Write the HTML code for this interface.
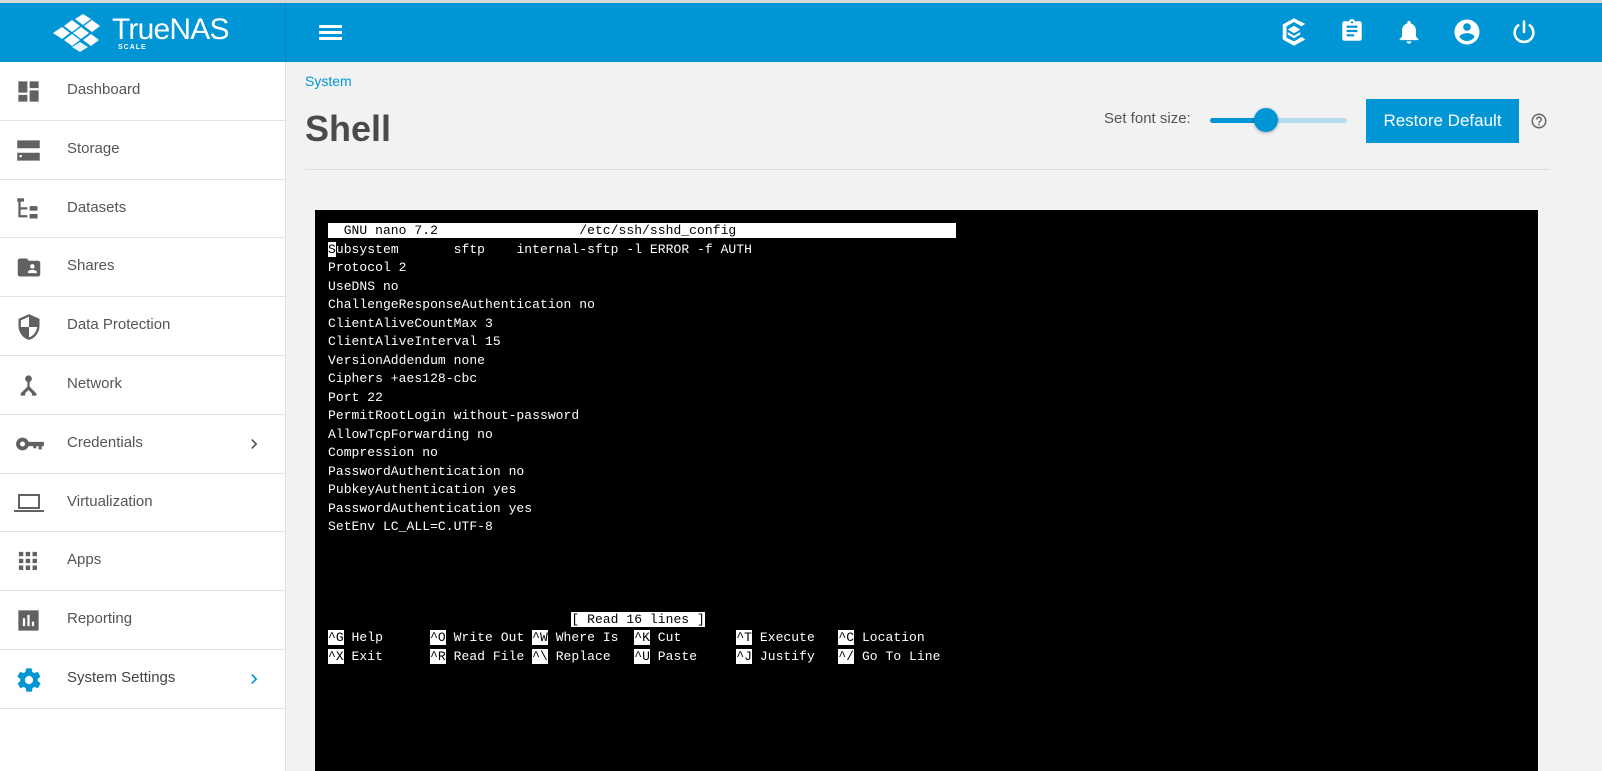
<!DOCTYPE html>
<html><head><meta charset="utf-8"><style>
*{box-sizing:border-box;margin:0;padding:0}
body{width:1602px;height:771px;overflow:hidden;background:#f2f2f2;font-family:"Liberation Sans",sans-serif;position:relative}
.top{position:absolute;left:0;top:0;width:1602px;height:3px;background:#d8d8d8}
.hdr{position:absolute;left:0;top:3px;width:1602px;height:59px;background:#0095d5}
.logoarea{position:absolute;left:0;top:0;width:286px;height:59px;border-right:1px solid #0a84bb}
.side{position:absolute;left:0;top:62px;width:286px;height:709px;background:#fff;border-right:1px solid #ddd}
.item{height:58.8px;border-bottom:1px solid #e2e2e2;position:relative;color:#555;font-size:15px}
.item span{position:absolute;left:67px;top:19px}
.item .ic{position:absolute;left:15px;top:16px}
.item .chev{position:absolute;left:244px;top:19px}
.term{position:absolute;left:315px;top:210px;width:1223px;height:561px;background:#000}
pre{position:absolute;left:13px;top:12px;font-family:"Liberation Mono",monospace;font-size:13px;line-height:18.5px;color:#fff;letter-spacing:0.05px}
.w{background:#fff;color:#000}
</style></head><body>
<div class="top"></div>
<div class="hdr">
 <div class="logoarea">
  <svg width="56" height="40" viewBox="0 0 56 40" style="position:absolute;left:50px;top:10px" fill="#fff">
   <polygon points="3,20 12,14 20,20 12,26"/><polygon points="14,13 22,7 30,13 22,19"/>
   <polygon points="25,6 33,1 41,6 33,12"/><polygon points="23,20 31,14 39,20 31,26"/><polygon points="34,13 42,7 50,13 42,19"/>
   <polygon points="14,27 22,21 30,27 22,33"/><polygon points="33,27 41,21 49,27 41,33"/><polygon points="22,34 30,29 38,34 30,39" opacity=".9"/>
  </svg>
  <div style="position:absolute;left:112px;top:10px;color:#fff;font-size:30px;letter-spacing:-0.8px">TrueNAS</div>
  <div style="position:absolute;left:118px;top:41px;color:#fff;font-size:7px;font-weight:bold;letter-spacing:1px">SCALE</div>
 </div>
 <div style="position:absolute;left:319px;top:22px;width:23px;height:3px;background:#fff;box-shadow:0 6px 0 #fff,0 12px 0 #fff"></div>
 <svg width="30" height="30" viewBox="0 0 24 24" style="position:absolute;left:1279px;top:14px" fill="#fff"><path d="M12 1L3 6v12l9 5 9-5-3-2-6 3.5L6 16.5v-9L12 4l6 3.5 3-2z"/><path d="M12 7l-5 3 5 3 5-3z M7 12l5 3 5-3v2l-5 3-5-3z"/></svg>
 <svg width="26" height="28" viewBox="0 0 24 24" style="position:absolute;left:1339px;top:14px" fill="#fff"><path d="M19 3h-4.2C14.4 1.8 13.3 1 12 1s-2.4.8-2.8 2H5c-1.1 0-2 .9-2 2v14c0 1.1.9 2 2 2h14c1.1 0 2-.9 2-2V5c0-1.1-.9-2-2-2zm-7 0c.6 0 1 .4 1 1s-.4 1-1 1-1-.4-1-1 .4-1 1-1zm2 14H7v-2h7v2zm3-4H7v-2h10v2zm0-4H7V7h10v2z"/></svg>
 <svg width="28" height="28" viewBox="0 0 24 24" style="position:absolute;left:1395px;top:15px" fill="#fff"><path d="M12 22c1.1 0 2-.9 2-2h-4c0 1.1.9 2 2 2zm6-6v-5c0-3.1-1.600-5.6-4.5-6.3V4c0-.8-.7-1.5-1.5-1.5s-1.5.7-1.5 1.5v.7C7.6 5.4 6 7.9 6 11v5l-2 2v1h16v-1l-2-2z"/></svg>
 <svg width="30" height="30" viewBox="0 0 24 24" style="position:absolute;left:1452px;top:14px" fill="#fff"><path d="M12 2C6.5 2 2 6.5 2 12s4.5 10 10 10 10-4.5 10-10S17.5 2 12 2zm0 3c1.7 0 3 1.3 3 3s-1.3 3-3 3-3-1.3-3-3 1.3-3 3-3zm0 14.2c-2.500 0-4.7-1.3-6-3.2 0-2 4-3.1 6-3.1s6 1.1 6 3.1c-1.3 1.9-3.5 3.2-6 3.2z"/></svg>
 <svg width="28" height="28" viewBox="0 0 24 24" style="position:absolute;left:1510px;top:15px" fill="none" stroke="#fff" stroke-width="2.2" stroke-linecap="round"><path d="M12 3v9"/><path d="M7 6.3A8 8 0 1 0 17 6.3"/></svg>
</div>
<div class="side">
 <div class="item"><svg class="ic" width="27" height="27" viewBox="0 0 24 24" fill="#616161"><path d="M3 13h8V3H3zm0 8h8v-6H3zm10 0h8V11h-8zm0-18v6h8V3z"/></svg><span>Dashboard</span></div>
 <div class="item"><svg class="ic" width="27" height="27" viewBox="0 0 24 24" fill="#616161"><path d="M2 21h20v-7H2zm2-5h2v2H4zM2 3v7h20V3zm4 3H4V6h2z"/></svg><span>Storage</span></div>
 <div class="item"><svg class="ic" width="27" height="27" viewBox="0 0 24 24" fill="#616161"><path d="M2 2h6v3H2zM3 5h2v5h6v2H5v5h6v2H3z M13 9h7v4h-7z M13 16h7v4h-7z"/></svg><span>Datasets</span></div>
 <div class="item"><svg class="ic" width="28" height="27" viewBox="0 0 24 24" fill="#616161"><path d="M20 6h-8l-2-2H4c-1.1 0-2 .9-2 2v12c0 1.1.9 2 2 2h16c1.1 0 2-.9 2-2V8c0-1.1-.9-2-2-2zm-5 3c1.1 0 2 .9 2 2s-.9 2-2 2-2-.9-2-2 .9-2 2-2zm4 8h-8v-1c0-1.3 2.700-2 4-2s4 .7 4 2z"/></svg><span>Shares</span></div>
 <div class="item"><svg class="ic" width="28" height="28" viewBox="0 0 24 24" fill="#616161"><path d="M12 1L3 5v6c0 5.5 3.8 10.7 9 12 5.2-1.3 9-6.5 9-12V5zm0 11h7c-.5 4.1-3.3 7.8-7 8.900V12H5V6.3l7-3.1z"/></svg><span>Data Protection</span></div>
 <div class="item"><svg class="ic" width="27" height="27" viewBox="0 0 24 24" fill="#616161"><circle cx="12" cy="6" r="3"/><path d="M11 8h2v5l6 6v2h-4v-2l-3-3-3 3v2H5v-2l6-6z"/></svg><span>Network</span></div>
 <div class="item"><svg class="ic" width="30" height="26" viewBox="0 0 28 24" fill="#616161"><circle cx="7" cy="12" r="6"/><circle cx="7" cy="12" r="2.3" fill="#fff"/><path d="M12 10h15v4h-2v3h-3v-3h-2v2h-3v-2h-5z"/></svg><span>Credentials</span><svg class="chev" width="20" height="20" viewBox="0 0 24 24" fill="#555"><path d="M8.6 16.6L13.2 12 8.6 7.4 10 6l6 6-6 6z"/></svg></div>
 <div class="item"><svg class="ic" width="30" height="26" viewBox="0 0 30 24" fill="#616161" style="left:14px"><path d="M4 3h22v15H4zm2 2v11h18V5zM0 19h30v2H0z"/></svg><span>Virtualization</span></div>
 <div class="item"><svg class="ic" width="26" height="26" viewBox="0 0 24 24" fill="#616161"><path d="M3 3h4.5v4.5H3zm7 0h4.5v4.5H10zm7 0h4.5v4.5H17zM3 10h4.5v4.5H3zm7 0h4.5v4.5H10zm7 0h4.5v4.5H17zM3 17h4.5v4.5H3zm7 0h4.5v4.5H10zm7 0h4.5v4.5H17z" transform="scale(.9) translate(1,1)"/></svg><span>Apps</span></div>
 <div class="item"><svg class="ic" width="27" height="27" viewBox="0 0 24 24" fill="#616161"><path d="M3 3h18v18H3zm4 7v7h2v-7zm4-3v10h2V7zm4 6v4h2v-4z"/></svg><span>Reporting</span></div>
 <div class="item"><svg class="ic" width="28" height="28" viewBox="0 0 24 24" fill="#0095d5"><path d="M19.4 13c.1-.3.1-.7.1-1s0-.7-.1-1l2.1-1.6c.2-.2.2-.4.1-.6l-2-3.5c-.1-.2-.4-.3-.6-.2l-2.500 1c-.5-.4-1.100-.7-1.700-1l-.4-2.700c0-.2-.2-.4-.5-.4h-4c-.2 0-.4.2-.5.4l-.4 2.700c-.6.2-1.100.6-1.700 1l-2.500-1c-.2-.1-.5 0-.6.2l-2 3.500c-.1.2-.1.5.1.6L4.600 11c0 .3-.1.7-.1 1s0 .7.1 1l-2.100 1.600c-.2.2-.2.4-.1.6l2 3.500c.1.2.4.3.6.2l2.500-1c.5.4 1.100.7 1.700 1l.4 2.700c0 .2.2.4.5.4h4c.2 0 .5-.2.5-.4l.4-2.700c.6-.2 1.200-.6 1.700-1l2.500 1c.2.1.5 0 .6-.2l2-3.500c.1-.2.1-.5-.1-.6zM12 15.500c-1.900 0-3.500-1.600-3.500-3.500s1.600-3.500 3.500-3.500 3.500 1.600 3.500 3.500-1.600 3.500-3.500 3.500z"/></svg><span style="color:#444">System Settings</span><svg class="chev" width="20" height="20" viewBox="0 0 24 24" fill="#0095d5"><path d="M8.6 16.6L13.2 12 8.6 7.4 10 6l6 6-6 6z"/></svg></div>
</div>
<div style="position:absolute;left:305px;top:73px;color:#0095d5;font-size:14px">System</div>
<div style="position:absolute;left:305px;top:108px;color:#4a4a4a;font-size:36px;font-weight:bold">Shell</div>
<div style="position:absolute;left:305px;top:169px;width:1245px;height:1px;background:#ddd"></div>
<div style="position:absolute;left:1104px;top:110px;color:#555;font-size:15px">Set font size:</div>
<div style="position:absolute;left:1210px;top:118px;width:137px;height:5px;border-radius:3px;background:#b6dcee"></div>
<div style="position:absolute;left:1210px;top:118px;width:56px;height:5px;border-radius:3px;background:#0095d5"></div>
<div style="position:absolute;left:1254px;top:108px;width:24px;height:24px;border-radius:50%;background:#0095d5;box-shadow:0 1px 3px rgba(0,0,0,.3)"></div>
<div style="position:absolute;left:1366px;top:99px;width:153px;height:44px;background:#0095d5;color:#fff;font-size:17px;text-align:center;line-height:44px">Restore Default</div>
<svg width="18" height="18" viewBox="0 0 24 24" style="position:absolute;left:1530px;top:112px" fill="#666"><path d="M11 18h2v-2h-2zm1-16C6.500 2 2 6.500 2 12s4.500 10 10 10 10-4.500 10-10S17.500 2 12 2zm0 18c-4.400 0-8-3.600-8-8s3.600-8 8-8 8 3.600 8 8-3.600 8-8 8zm0-14c-2.200 0-4 1.800-4 4h2c0-1.100.9-2 2-2s2 .9 2 2c0 2-3 1.800-3 5h2c0-2.300 3-2.500 3-5 0-2.200-1.800-4-4-4z"/></svg>
<div class="term"><pre><span class="w">  GNU nano 7.2                  /etc/ssh/sshd_config                            </span>
<span class="w">S</span>ubsystem       sftp    internal-sftp -l ERROR -f AUTH
Protocol 2
UseDNS no
ChallengeResponseAuthentication no
ClientAliveCountMax 3
ClientAliveInterval 15
VersionAddendum none
Ciphers +aes128-cbc
Port 22
PermitRootLogin without-password
AllowTcpForwarding no
Compression no
PasswordAuthentication no
PubkeyAuthentication yes
PasswordAuthentication yes
SetEnv LC_ALL=C.UTF-8




                               <span class="w">[ Read 16 lines ]</span>
<span class="w">^G</span> Help      <span class="w">^O</span> Write Out <span class="w">^W</span> Where Is  <span class="w">^K</span> Cut       <span class="w">^T</span> Execute   <span class="w">^C</span> Location
<span class="w">^X</span> Exit      <span class="w">^R</span> Read File <span class="w">^\</span> Replace   <span class="w">^U</span> Paste     <span class="w">^J</span> Justify   <span class="w">^/</span> Go To Line</pre></div>
</body></html>
